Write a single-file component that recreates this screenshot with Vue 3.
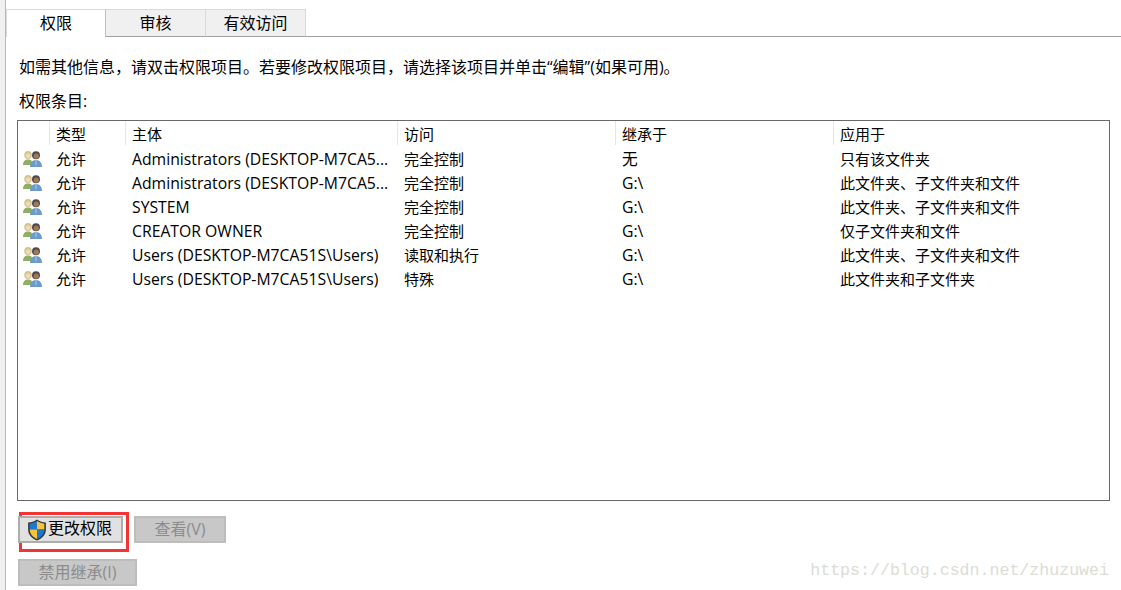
<script setup>
const headers = [
  { label: '', cls: 'c0' },
  { label: '类型', cls: 'c1' },
  { label: '主体', cls: 'c2' },
  { label: '访问', cls: 'c3' },
  { label: '继承于', cls: 'c4' },
  { label: '应用于', cls: 'c5' }
]
const rows = [
  ['允许', 'Administrators (DESKTOP-M7CA5...', '完全控制', '无', '只有该文件夹'],
  ['允许', 'Administrators (DESKTOP-M7CA5...', '完全控制', 'G:\\', '此文件夹、子文件夹和文件'],
  ['允许', 'SYSTEM', '完全控制', 'G:\\', '此文件夹、子文件夹和文件'],
  ['允许', 'CREATOR OWNER', '完全控制', 'G:\\', '仅子文件夹和文件'],
  ['允许', 'Users (DESKTOP-M7CA51S\\Users)', '读取和执行', 'G:\\', '此文件夹、子文件夹和文件'],
  ['允许', 'Users (DESKTOP-M7CA51S\\Users)', '特殊', 'G:\\', '此文件夹和子文件夹']
]
</script>

<template>
  <div class="page">
    <div class="strip"></div>
    <div class="main">
      <div class="tabs">
        <div class="tab active">权限</div>
        <div class="tab">审核</div>
        <div class="tab">有效访问</div>
        <div class="tab-rest"></div>
      </div>
      <div class="content">
        <p class="info">如需其他信息，请双击权限项目。若要修改权限项目，请选择该项目并单击“编辑”(如果可用)。</p>
        <p class="label">权限条目:</p>
        <div class="list">
          <div class="head">
            <div v-for="h in headers" :key="h.cls" class="hcell" :class="h.cls">{{ h.label }}</div>
          </div>
          <div v-for="(r, i) in rows" :key="i" class="row">
            <div class="cell c0">
              <svg class="users" width="19" height="17" viewBox="0 0 19 17">
                <ellipse cx="5" cy="4" rx="3.800" ry="4" fill="#d6c58f" />
                <circle cx="5.200" cy="4.800" r="2.400" fill="#eadcc0" />
                <path d="M0 14c0-3.500 1.800-5.500 5-5.500s5 2 5 5.500z" fill="#8fb062" />
                <circle cx="13" cy="4.200" r="4" fill="#4f4a4a" />
                <circle cx="13.300" cy="5.200" r="2.600" fill="#a5774f" />
                <path d="M7 16c0-4.200 2.300-7 6-7s6 2.800 6 7z" fill="#6c9bc9" />
                <path d="M13 9v5" stroke="#a9c8e6" stroke-width="1" />
              </svg>
            </div>
            <div class="cell c1">{{ r[0] }}</div>
            <div class="cell c2 latin">{{ r[1] }}</div>
            <div class="cell c3">{{ r[2] }}</div>
            <div class="cell c4 latin">{{ r[3] }}</div>
            <div class="cell c5">{{ r[4] }}</div>
          </div>
        </div>
        <div class="btn-row first">
          <div class="highlight">
            <button class="btn primary">
              <svg class="shield" width="20" height="22" viewBox="0 0 19 21">
                <path d="M9.500 0.500C7 2.500 4 3.300 1 3.300V10c0 5 3.500 8.500 8.500 10.500C14.500 18.500 18 15 18 10V3.300C15 3.300 12 2.500 9.500 0.500z" fill="#3a3a3a" />
                <path d="M9.500 2C7.300 3.500 5 4.300 2.500 4.500V10h7z" fill="#1e78d2" />
                <path d="M9.500 2c2.200 1.500 4.500 2.300 7 2.500V10h-7z" fill="#f8c23a" />
                <path d="M2.500 10h7v9C5.500 17.300 2.800 14.500 2.500 10z" fill="#f8c23a" />
                <path d="M16.500 10h-7v9c4-1.700 6.700-4.500 7-9z" fill="#1e78d2" />
              </svg>
              <span class="primary-label">更改权限</span>
            </button>
          </div>
          <button class="btn disabled view">查看(V)</button>
        </div>
        <div class="btn-row second">
          <button class="btn disabled inherit">禁用继承(I)</button>
        </div>
      </div>
    </div>
    <div class="watermark">https://blog.csdn.net/zhuzuwei</div>
  </div>
</template>

<style>
html, body { margin: 0; background: #fff; }
</style>

<style scoped>
.page {
  position: relative;
  width: 1121px;
  height: 590px;
  overflow: hidden;
  display: flex;
  background: #fff;
  color: #000;
  font-family: "Open Sans", "Noto Sans CJK SC", sans-serif;
  font-size: 15px;
}
.strip {
  width: 5px;
  flex: none;
  background: #f0f0f0;
  border-right: 1px solid #b8b8b8;
}
.main { flex: 1; min-width: 0; display: flex; flex-direction: column; }
.tabs { display: flex; height: 28px; margin-top: 9px; }
.tab {
  width: 100px;
  box-sizing: border-box;
  background: #f0f0f0;
  border-top: 1px solid #d9d9d9;
  border-right: 1px solid #d9d9d9;
  border-bottom: 1px solid #a0a0a0;
  text-align: center;
  line-height: 26px;
  font-size: 16px;
}
.tab.active {
  background: #fff;
  border-bottom: 0;
  border-left: 1px solid #d9d9d9;
  border-right: 1px solid #c0c0c0;
}
.tab-rest { flex: 1; border-bottom: 1px solid #a0a0a0; }
.content { padding: 0 11px; flex: 1; }
p { margin: 0; padding-left: 2px; font-size: 16px; }
.info { margin-top: 19px; line-height: 22px; }
.label { margin-top: 12px; line-height: 22px; }
.list {
  margin-top: 8px;
  height: 381px;
  box-sizing: border-box;
  border: 1px solid #696969;
  background: #fff;
}
.head { display: flex; height: 24px; }
.hcell {
  box-sizing: border-box;
  border-right: 1px solid #e5e5e5;
  padding-left: 6px;
  line-height: 26px;
  white-space: nowrap;
}
.row { display: flex; height: 24px; }
.cell {
  box-sizing: border-box;
  padding-left: 6px;
  line-height: 28px;
  white-space: nowrap;
}
.cell.latin { font-size: 15.750px; }
.c0 { width: 32px; padding-left: 5px; }
.c1 { width: 76px; }
.c2 { width: 272px; }
.c3 { width: 218px; }
.c4 { width: 218px; }
.c5 { flex: 1; border-right: 0; }
.users { display: block; margin-top: 6px; }
.btn-row { display: flex; }
.btn-row.first { margin-top: 11px; gap: 5px; align-items: flex-start; }
.btn-row.second { margin-top: 7px; }
.highlight {
  width: 110px;
  height: 40px;
  box-sizing: border-box;
  border: 3px solid #f43333;
  position: relative;
  margin-left: 2px;
}
.btn {
  font: inherit;
  box-sizing: border-box;
  padding: 0;
  border: 2px solid #bdbdbd;
  background: #c8c8c8;
  color: #8c8c8c;
  height: 27px;
  line-height: 19px;
  font-size: 16px;
}
.primary {
  position: absolute;
  left: -4px;
  top: 1px;
  width: 105px;
  background: #e1e1e1;
  border-color: #adadad;
  color: #000;
  display: flex;
  align-items: center;
  padding: 0 0 0 7px;
  white-space: nowrap;
}
.primary-label { position: relative; top: -1px; }
.shield { flex: none; margin-right: 1px; }
.view { width: 92px; margin-top: 4px; }
.inherit { width: 119px; margin-left: 1px; }
.watermark {
  position: absolute;
  right: 12px;
  bottom: 10px;
  font-family: "Liberation Mono", monospace;
  font-size: 16.600px;
  color: #dcdcd6;
  white-space: nowrap;
}
</style>
